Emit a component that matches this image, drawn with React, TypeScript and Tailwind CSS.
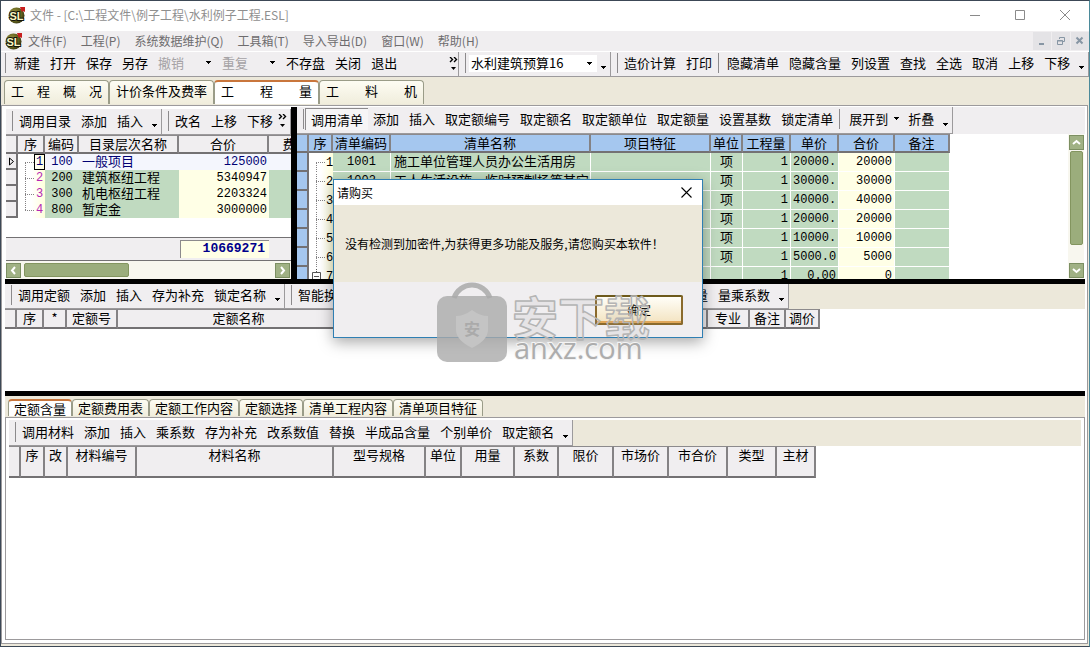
import type { ReactNode } from "react";
import clsx from "clsx";

type Column = { title: string; width: number };

type CatalogRow = { id: number; code: string; name: string; total: string };

type BillRow = {
  id: number;
  code: string;
  name: string;
  unit: string;
  qty: string;
  price: string;
  total: string;
};

const menuItems = [
  "文件(F)",
  "工程(P)",
  "系统数据维护(Q)",
  "工具箱(T)",
  "导入导出(D)",
  "窗口(W)",
  "帮助(H)",
];

const mainTabs = ["工　程　概　况", "计价条件及费率", "工　　程　　量", "工　　料　　机"];

const detailTabs = [
  "定额含量",
  "定额费用表",
  "定额工作内容",
  "定额选择",
  "清单工程内容",
  "清单项目特征",
];

const catalogColumns: Column[] = [
  { title: "", width: 12 },
  { title: "序", width: 27 },
  { title: "编码", width: 34 },
  { title: "目录层次名称", width: 100 },
  { title: "合价", width: 90 },
  { title: "费", width: 42 },
];

const catalogRows: CatalogRow[] = [
  { id: 1, code: "100", name: "一般项目", total: "125000" },
  { id: 2, code: "200", name: "建筑枢纽工程", total: "5340947" },
  { id: 3, code: "300", name: "机电枢纽工程", total: "2203324" },
  { id: 4, code: "800", name: "暂定金", total: "3000000" },
];

const billColumns: Column[] = [
  { title: "", width: 12 },
  { title: "序", width: 24 },
  { title: "清单编码", width: 58 },
  { title: "清单名称", width: 200 },
  { title: "项目特征", width: 120 },
  { title: "单位", width: 32 },
  { title: "工程量", width: 48 },
  { title: "单价", width: 48 },
  { title: "合价", width: 56 },
  { title: "备注", width: 55 },
];

const billRows: BillRow[] = [
  { id: 1, code: "1001", name: "施工单位管理人员办公生活用房", unit: "项", qty: "1", price: "20000.", total: "20000" },
  { id: 2, code: "1002", name: "工人生活设施、临时预制场等其它", unit: "项", qty: "1", price: "30000.", total: "30000" },
  { id: 3, code: "", name: "", unit: "项", qty: "1", price: "40000.", total: "40000" },
  { id: 4, code: "", name: "", unit: "项", qty: "1", price: "20000.", total: "20000" },
  { id: 5, code: "", name: "", unit: "项", qty: "1", price: "10000.", total: "10000" },
  { id: 6, code: "", name: "", unit: "项", qty: "1", price: "5000.0", total: "5000" },
  { id: 7, code: "", name: "", unit: "", qty: "1", price: "0.00", total: "0" },
];

const quotaColumns: Column[] = [
  { title: "", width: 12 },
  { title: "序", width: 27 },
  { title: "*", width: 23 },
  { title: "定额号", width: 51 },
  { title: "定额名称", width: 243 },
  { title: "", width: 347 },
  { title: "专业", width: 42 },
  { title: "备注", width: 36 },
  { title: "调价", width: 34 },
];

const materialColumns: Column[] = [
  { title: "", width: 12 },
  { title: "序", width: 24 },
  { title: "改", width: 23 },
  { title: "材料编号", width: 69 },
  { title: "材料名称", width: 197 },
  { title: "型号规格", width: 92 },
  { title: "单位", width: 36 },
  { title: "用量", width: 53 },
  { title: "系数", width: 44 },
  { title: "限价", width: 55 },
  { title: "市场价", width: 55 },
  { title: "市合价", width: 59 },
  { title: "类型", width: 49 },
  { title: "主材", width: 39 },
];

const Logo = () => (
  <svg width="18" height="18" viewBox="0 0 18 18" className="shrink-0" aria-hidden="true">
    <defs>
      <radialGradient id="ball" cx="0.35" cy="0.4" r="0.75">
        <stop offset="0" stopColor="#a19c48" />
        <stop offset="0.6" stopColor="#66641f" />
        <stop offset="1" stopColor="#22230c" />
      </radialGradient>
    </defs>
    <circle cx="8.5" cy="9.5" r="8" fill="url(#ball)" />
    <path d="M12 1h5v5l-2-1-1 1-1-2z" fill="#c81e1e" />
    <text
      x="8.500"
      y="14"
      textAnchor="middle"
      fontFamily="'Liberation Sans', sans-serif"
      fontWeight="bold"
      fontSize="11"
      fill="#fbf6c0"
      stroke="#14140a"
      strokeWidth="2"
      paintOrder="stroke"
    >
      SL
    </text>
  </svg>
);

const Arrow = () => (
  <svg width="7" height="4" viewBox="0 0 7 4" className="shrink-0" shapeRendering="crispEdges" aria-hidden="true">
    <path d="M1 0h5v1H5v1H4v1H3V2H2V1H1z" fill="#000" />
  </svg>
);

const Chevrons = () => (
  <svg width="9" height="13" viewBox="0 0 9 13" className="shrink-0" aria-hidden="true">
    <path d="M1 0l2.5 2.5L1 5M5 0l2.5 2.5L5 5" stroke="#000" strokeWidth="1.4" fill="none" />
    <path d="M2 10h5l-2.500 3z" fill="#000" />
  </svg>
);

const Tool = ({ children, disabled, pressed }: { children: ReactNode; disabled?: boolean; pressed?: boolean }) => (
  <button
    type="button"
    disabled={disabled}
    className={clsx(
      "h-[22px] shrink-0 px-[5px] whitespace-nowrap",
      disabled && "text-[#a5a2a5]",
      pressed && "border-t border-l border-[#8c8a8c] bg-[#f6f5f6]"
    )}
  >
    {children}
  </button>
);

const Separator = ({ className }: { className: string }) => (
  <span className={clsx("h-5 w-px shrink-0 bg-[#8c8a8c]", className)} />
);

const Grip = () => <span className="mr-px ml-1 h-5 w-[3px] shrink-0 border-r border-[#8c8a8c]" />;

const Overflow = () => (
  <button type="button" aria-label="更多" className="flex h-full w-[13px] shrink-0 items-end justify-center pb-1">
    <Arrow />
  </button>
);

const Band = ({ items, children, className }: { items?: string[]; children?: ReactNode; className?: string }) => (
  <div
    className={clsx(
      "flex h-full shrink-0 items-center border-r border-b border-[#9c9a9c] bg-[#f0eef0] pb-0.5",
      className
    )}
  >
    <Grip />
    {items?.map((item) => (
      <Tool key={item}>{item}</Tool>
    ))}
    {children}
  </div>
);

const Cols = ({ columns }: { columns: Column[] }) => (
  <colgroup>
    {columns.map((col, i) => (
      <col key={i} style={{ width: col.width }} />
    ))}
  </colgroup>
);

const HeadRow = ({ columns, className }: { columns: Column[]; className: string }) => (
  <thead>
    <tr>
      {columns.map((col, i) => (
        <th
          key={i}
          className={clsx(
            "overflow-hidden border-t border-r-2 border-b-2 border-t-[#8c8a8c] border-r-[#848284] border-b-[#737173] p-0 align-top font-normal whitespace-nowrap",
            className
          )}
        >
          {col.title}
        </th>
      ))}
    </tr>
  </thead>
);

const Tab = ({ label, active, small }: { label: string; active: boolean; small?: boolean }) => (
  <button
    type="button"
    role="tab"
    aria-selected={active}
    className={clsx(
      "shrink-0 rounded-t-sm border border-b-0 border-[#9a9c88] whitespace-nowrap",
      small ? "h-[17px] px-[5px]" : "h-6 px-1.5 pb-1",
      active
        ? "border-t-2 border-t-[#c9763c] bg-white"
        : "bg-linear-to-b from-[#fdfcf3] to-[#f0eddc]"
    )}
  >
    {label}
  </button>
);

const ScrollButton = ({ label, d }: { label: string; d: string }) => (
  <button
    type="button"
    aria-label={label}
    className="flex size-[15px] shrink-0 items-center justify-center border border-[#7c8f62] bg-[#a0b184]"
  >
    <svg width="11" height="11" viewBox="0 0 11 11" fill="none" stroke="#fff" strokeWidth="2">
      <path d={d} />
    </svg>
  </button>
);

const TreeLine = ({ first, last }: { first?: boolean; last?: boolean }) => (
  <svg width="16" height="19" viewBox="0 0 16 19" className="shrink-0" fill="none" stroke="#848284" strokeDasharray="1 1">
    {!first && <path d="M7.500 0v10" />}
    {!last && <path d="M7.500 10v9" />}
    <path d="M7 9.500h9" />
  </svg>
);

const CatalogPane = () => (
  <section className="flex w-[286px] shrink-0 flex-col overflow-hidden pl-px">
    <div className="flex h-7 shrink-0 border-t-2 border-white bg-[#f0eef0]">
      <Band items={["调用目录", "添加", "插入"]}>
        <Overflow />
      </Band>
      <Band items={["改名", "上移", "下移"]} className="flex-1">
        <Chevrons />
      </Band>
    </div>
    <div className="flex-1 overflow-hidden">
      <table className="w-[305px] table-fixed border-separate border-spacing-0">
        <Cols columns={catalogColumns} />
        <HeadRow columns={catalogColumns} className="h-[19px] bg-[#f0eef0]" />
        <tbody>
          {catalogRows.map((row) => {
            const current = row.id === 1;
            const fill = current ? "bg-[#f4f6fd]" : "bg-[#c0dac0]";
            return (
              <tr key={row.id} className={clsx("h-4", current && "text-[#000073]")}>
                <td className="border-r-2 border-b-2 border-[#737173] bg-[#f0eef0] p-0">
                  {current && (
                    <svg width="7" height="9" viewBox="0 0 7 9" className="mx-auto" fill="none" stroke="#000">
                      <path d="M1.500 1v7L5.500 4.500z" />
                    </svg>
                  )}
                </td>
                <td className="bg-linear-to-r from-white from-50% to-[#ffffdb] p-0">
                  <div className="flex h-4 items-center">
                    <TreeLine first={current} last={row.id === 4} />
                    <span
                      className={clsx(
                        "h-4 w-[11px] text-center font-[Liberation_Mono,monospace] text-[12px]",
                        current ? "border border-black leading-[14px]" : "text-[#b527b5]"
                      )}
                    >
                      {row.id}
                    </span>
                  </div>
                </td>
                <td className={clsx("p-0 text-center font-[Liberation_Mono,monospace] text-[12px]", fill)}>
                  {row.code}
                </td>
                <td className={clsx("p-0 pl-[3px] align-top leading-[14px] whitespace-nowrap", fill)}>{row.name}</td>
                <td
                  className={clsx(
                    "p-0 pr-0.5 text-right font-[Liberation_Mono,monospace] text-[12px]",
                    current ? fill : "bg-[#ffffe6]"
                  )}
                >
                  {row.total}
                </td>
                <td className={clsx("p-0", fill)} />
              </tr>
            );
          })}
        </tbody>
      </table>
    </div>
    <div className="flex h-6 shrink-0 items-center border-t border-b border-[#737173] bg-[#f0eef0]">
      <output className="ml-[174px] h-[18px] w-[89px] border-t border-l border-[#8c8a8c] bg-[#ffffe6] pr-1 text-right font-[Liberation_Mono,monospace] text-[13px] font-bold text-[#00008c]">
        10669271
      </output>
    </div>
    <div className="flex h-[18px] shrink-0 items-center bg-[#f8f7ef] pr-px">
      <ScrollButton label="向左" d="M7 2L4 5.500l3 3.500" />
      <span className="ml-[3px] h-[14px] w-[105px] rounded-xs border border-[#83955f] bg-[#9bad7c]" />
      <span className="flex-1" />
      <ScrollButton label="向右" d="M4 2l3 3.500L4 9" />
    </div>
  </section>
);

const BillPane = () => (
  <section className="flex min-w-0 flex-1 flex-col overflow-hidden">
    <div className="flex h-[27px] shrink-0 bg-[#f0eef0]">
      <Band>
        <Tool pressed>调用清单</Tool>
        {["添加", "插入", "取定额编号", "取定额名", "取定额单位", "取定额量", "设置基数", "锁定清单"].map((item) => (
          <Tool key={item}>{item}</Tool>
        ))}
        <Separator className="mr-1 ml-px" />
        <Tool>展开到</Tool>
        <Arrow />
        <span className="w-[3px]" />
        <Tool>折叠</Tool>
        <Overflow />
      </Band>
    </div>
    <div className="flex min-h-0 flex-1 bg-white">
      <div className="min-w-0 flex-1 overflow-hidden">
        <table className="w-[653px] table-fixed border-separate border-spacing-0">
          <Cols columns={billColumns} />
          <HeadRow columns={billColumns} className="h-[19px] bg-[#a5c7ef]" />
          <tbody>
            {billRows.map((row) => (
              <tr
                key={row.id}
                className="h-[19px] [&>td]:border-r [&>td]:border-b [&>td]:border-white [&>td]:bg-[#c0dac0] [&>td]:p-0"
              >
                <td className="border-r-2! border-b-2! border-[#737173]! bg-[#a5c7ef]!" />
                <td className="border-0! bg-linear-to-r from-white from-50% to-[#ffffdb] bg-transparent!">
                  <div className="flex h-[18px] items-center overflow-hidden">
                    {row.id === 7 ? (
                      <svg width="16" height="19" viewBox="0 0 16 19" className="shrink-0" fill="none" stroke="#555">
                        <path d="M3.500 5.500h8v8h-8zM5 9.500h5" />
                        <path d="M7.500 0v5" strokeDasharray="1 1" />
                      </svg>
                    ) : (
                      <TreeLine first={row.id === 1} />
                    )}
                    <span className="ml-px font-[Liberation_Mono,monospace] text-[12px]">{row.id}</span>
                  </div>
                </td>
                <td className="text-center font-[Liberation_Mono,monospace] text-[12px]">{row.code}</td>
                <td className="pl-[3px]! align-top whitespace-nowrap">{row.name}</td>
                <td />
                <td className="text-center align-top">{row.unit}</td>
                <td className="pr-0.5! text-right font-[Liberation_Mono,monospace] text-[12px]">{row.qty}</td>
                <td
                  className={clsx(
                    "px-0.5! font-[Liberation_Mono,monospace] text-[12px]",
                    row.id === 7 && "text-right"
                  )}
                >
                  {row.price}
                </td>
                <td className="bg-[#ffffe6]! pr-0.5! text-right font-[Liberation_Mono,monospace] text-[12px]">
                  {row.total}
                </td>
                <td />
              </tr>
            ))}
          </tbody>
        </table>
      </div>
      <div className="mr-px flex w-4 flex-col items-center bg-[#f8f7ef] py-px">
        <ScrollButton label="向上" d="M2 7l3.500-3L9 7" />
        <span className="mt-px h-[94px] w-[13px] rounded-xs border border-[#83955f] bg-[#9bad7c]" />
        <span className="flex-1" />
        <ScrollButton label="向下" d="M2 4l3.500 3L9 4" />
      </div>
    </div>
  </section>
);

const PurchaseDialog = () => (
  <div
    role="dialog"
    aria-labelledby="dialog-title"
    className="absolute top-[178px] left-[332px] w-[370px] border border-[#2f7fb3] bg-[#f0eef0] text-[12px] shadow-[0_4px_14px_rgba(0,0,0,0.35)]"
  >
    <div className="flex h-[25px] items-center justify-between bg-white pr-2.5 pl-[3px]">
      <h2 id="dialog-title">请购买</h2>
      <button type="button" aria-label="关闭">
        <svg width="11" height="11" viewBox="0 0 11 11" stroke="#000" strokeWidth="1.100">
          <path d="M0.500 0.500l10 10M10.500 0.500l-10 10" />
        </svg>
      </button>
    </div>
    <p className="flex h-[77px] items-center bg-[#ece8da] pl-[11px] whitespace-nowrap">
      没有检测到加密件,为获得更多功能及服务,请您购买本软件！
    </p>
    <div className="flex h-[55px] items-center justify-end pr-[19px]">
      <button
        type="button"
        className="h-[30px] w-[88px] rounded-xs border-2 border-[#8a6a2c] border-t-[#6d5a1c] bg-linear-to-b from-[#fffef8] to-[#f3e3c0] shadow-[inset_0_-2px_0_#e0a75a]"
      >
        确定
      </button>
    </div>
  </div>
);

const Watermark = () => (
  <svg
    width="216"
    height="84"
    viewBox="0 0 216 84"
    className="pointer-events-none absolute top-[280px] left-[436px]"
  >
    <path d="M17 17a19 19 0 0 1 36 0" fill="none" stroke="#a9a9a9" strokeWidth="5" opacity="0.85" />
    <rect y="15" width="70" height="66" rx="10" fill="#aaa" opacity="0.8" />
    <path d="M35 29q8 6 16 6v14q0 10-16 18q-16-8-16-18V35q8 0 16-6z" fill="#c4c4c4" />
    <text x="35" y="54" textAnchor="middle" fontSize="16" fill="#aaa" fontWeight="bold" fontFamily="'Noto Sans CJK SC', sans-serif">
      安
    </text>
    <text
      x="75"
      y="54"
      fontFamily="'Noto Sans CJK SC', sans-serif"
      fontWeight="bold"
      fontSize="46"
      fill="#a4a4a4"
      fillOpacity="0.12"
      stroke="#b4b4b4"
      strokeWidth="1.500"
      strokeLinejoin="round"
    >
      安下载
    </text>
    <text
      x="77"
      y="78"
      fontFamily="'Open Sans', sans-serif"
      fontWeight="500"
      fontSize="29"
      fill="#adadad"
      stroke="#f4f4f4"
      strokeWidth="2"
      paintOrder="stroke"
    >
      anxz.com
    </text>
  </svg>
);

export default function App() {
  return (
    <div className="relative flex min-h-screen flex-col overflow-hidden border border-[#3c4856] border-r-[#4b8a9a] bg-[#ece8da] font-[Noto_Sans_CJK_SC,sans-serif] text-[13px] leading-4 text-black">
      <header className="flex h-[30px] shrink-0 items-center bg-white pr-0.5 pb-0.5 pl-[7px] text-[12px] text-[#8f8f8f]">
        <Logo />
        <h1 className="ml-1 flex-1 whitespace-nowrap">文件 - [C:\工程文件\例子工程\水利例子工程.ESL]</h1>
        {[
          { label: "最小化", d: "M0 5.500h10" },
          { label: "最大化", d: "M0.500 0.500h9v9h-9z" },
          { label: "关闭", d: "M0 0l10 10M10 0L0 10" },
        ].map((btn) => (
          <button key={btn.label} type="button" aria-label={btn.label} className="flex h-full w-[45px] items-center justify-center">
            <svg width="10" height="10" viewBox="0 0 10 10" fill="none" stroke="#8a8a8a">
              <path d={btn.d} />
            </svg>
          </button>
        ))}
      </header>

      <nav className="flex h-5 shrink-0 items-center bg-[#f0eef0] pl-1 text-[12px] text-[#6e6c6e]">
        <Logo />
        <div className="flex flex-1">
          {menuItems.map((item) => (
            <button key={item} type="button" className="pr-[9px] pl-[5px] whitespace-nowrap">
              {item}
            </button>
          ))}
        </div>
        <div className="flex gap-px">
          {["M2 8h5", "M3.500 3V1.500h5v4H7M1.500 4.500h5v4h-5zM1 5h6", "M1.500 1.500l6 6M7.500 1.500l-6 6"].map((d, i) => (
            <button
              key={d}
              type="button"
              aria-label={["最小化子窗口", "还原子窗口", "关闭子窗口"][i]}
              className="flex h-[18px] w-[18px] items-center justify-center bg-[#e4e3e6]"
            >
              <svg width="10" height="10" viewBox="0 0 10 10" fill="none" stroke="#8796a4" strokeWidth={i === 1 ? 1 : 2}>
                <path d={d} />
              </svg>
            </button>
          ))}
        </div>
      </nav>

      <div className="flex h-[26px] shrink-0 border-t border-white bg-[#f0eef0]">
        <div className="flex h-full w-[458px] shrink-0 items-center border-r border-b border-[#9c9a9c] pb-0.5">
          <span className="mr-[3px] h-5 w-[5px] border-r border-[#8c8a8c]" />
          {["新建", "打开", "保存", "另存"].map((item) => (
            <Tool key={item}>{item}</Tool>
          ))}
          <Tool disabled>撤销</Tool>
          <span className="w-4" />
          <Arrow />
          <span className="w-[5px]" />
          <Tool disabled>重复</Tool>
          <span className="w-4" />
          <Arrow />
          <span className="w-[5px]" />
          {["不存盘", "关闭", "退出"].map((item) => (
            <Tool key={item}>{item}</Tool>
          ))}
          <span className="flex-1" />
          <Chevrons />
        </div>
        <Band>
          <div className="relative ml-0.5">
            <select
              aria-label="工程模板"
              className="block h-[17px] w-[128px] appearance-none bg-white pl-0.5 leading-4"
            >
              <option>水利建筑预算16</option>
            </select>
            <span className="pointer-events-none absolute top-[7px] right-1 flex">
              <Arrow />
            </span>
          </div>
          <Overflow />
        </Band>
        <Band className="flex-1" items={["造价计算", "打印"]}>
          <Separator className="mr-[3px] ml-px" />
          {["隐藏清单", "隐藏含量", "列设置", "查找", "全选", "取消", "上移", "下移"].map((item) => (
            <Tool key={item}>{item}</Tool>
          ))}
          <Overflow />
        </Band>
      </div>

      <div role="tablist" className="flex h-[28px] shrink-0 items-start pt-[3px] pl-[3px]">
        {mainTabs.map((tab, i) => (
          <Tab key={tab} label={tab} active={i === 2} />
        ))}
      </div>

      <main className="mr-px mb-0.5 flex flex-1 flex-col border border-[#9c9a9c] bg-white pt-px pr-0.5 pl-[3px]">
        <div className="flex h-[172px] shrink-0">
          <CatalogPane />
          <div className="w-1.5 shrink-0 bg-black" />
          <BillPane />
        </div>

        <div className="h-[5px] shrink-0 bg-black" />

        <section className="flex h-[107px] shrink-0 flex-col overflow-hidden">
          <div className="flex h-[25px] shrink-0 bg-[#ece8da]">
            <Band items={["调用定额", "添加", "插入", "存为补充", "锁定名称"]}>
              <Overflow />
            </Band>
            <Band className="w-[504px]" items={["智能换算"]}>
              <span className="flex-1" />
              <Tool>取定额量</Tool>
              <Tool>量乘系数</Tool>
              <Overflow />
            </Band>
          </div>
          <table className="w-[815px] table-fixed border-separate border-spacing-0">
            <Cols columns={quotaColumns} />
            <HeadRow columns={quotaColumns} className="h-5 bg-[#f0eef0]" />
          </table>
        </section>

        <div className="h-[5px] shrink-0 bg-black" />

        <div role="tablist" className="flex h-[21px] shrink-0 items-start bg-[#ece8da] pt-[3px] pl-[3px]">
          {detailTabs.map((tab, i) => (
            <Tab key={tab} label={tab} active={i === 0} small />
          ))}
        </div>
        <section className="mb-[3px] flex-1 border border-[#9c9a9c] bg-white px-[3px] pt-0.5">
          <div className="flex h-[26px] bg-[#ece8da]">
            <Band
              items={[
                "调用材料",
                "添加",
                "插入",
                "乘系数",
                "存为补充",
                "改系数值",
                "替换",
                "半成品含量",
                "个别单价",
                "取定额名",
              ]}
            >
              <Overflow />
            </Band>
          </div>
          <table className="w-[807px] table-fixed border-separate border-spacing-0">
            <Cols columns={materialColumns} />
            <HeadRow columns={materialColumns} className="h-8 bg-[#f0eef0]" />
          </table>
        </section>
      </main>

      <PurchaseDialog />
      <Watermark />
    </div>
  );
}
